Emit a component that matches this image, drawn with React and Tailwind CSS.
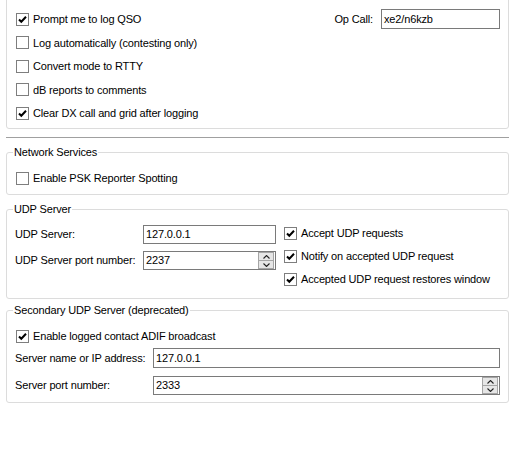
import React from 'react';

const CheckMark = () => (
  <svg width="11" height="11" viewBox="0 0 11 11" className="block">
    <path d="M2 5.5 L4.3 7.8 L9 2.8" fill="none" stroke="#000" strokeWidth="2" />
  </svg>
);

const Check = ({ checked, label, className = '' }) => (
  <div className={`flex items-center ${className}`}>
    <div className="w-[13px] h-[13px] border border-[#7e7e7e] bg-white flex items-center justify-center shrink-0">
      {checked && <CheckMark />}
    </div>
    <span className="ml-[4px] whitespace-nowrap">{label}</span>
  </div>
);

const Field = ({ value, className = '' }) => (
  <div className={`border border-[#7a7a7a] bg-white flex items-center pl-[2px] ${className}`}>
    <span className="leading-none">{value}</span>
  </div>
);

const Spin = ({ value, className = '' }) => (
  <div className={`border border-[#7a7a7a] bg-white flex items-center pl-[2px] pr-px ${className}`}>
    <span className="flex-1 leading-none">{value}</span>
    <div className="flex flex-col w-[16px] h-[17px]">
      <div className="flex-1 bg-[#e6e6e6] border border-[#a5a5a5] flex items-center justify-center">
        <svg width="7" height="4" viewBox="0 0 7 4">
          <path d="M0.5 3.5 L3.5 0.5 L6.5 3.5" fill="none" stroke="#222" strokeWidth="1.1" />
        </svg>
      </div>
      <div className="flex-1 bg-[#e6e6e6] border border-t-0 border-[#a5a5a5] flex items-center justify-center">
        <svg width="7" height="4" viewBox="0 0 7 4">
          <path d="M0.5 0.5 L3.5 3.5 L6.5 0.5" fill="none" stroke="#222" strokeWidth="1.1" />
        </svg>
      </div>
    </div>
  </div>
);

// title sitting on the top border of a group box
const GroupLabel = ({ children }) => (
  <div className="-mt-[7px] -ml-[2px] w-fit bg-white px-px leading-[13px]">{children}</div>
);

export default function App() {
  return (
    <div
      className="w-[515px] h-[455px] bg-white overflow-hidden text-[11px] tracking-[-0.15px] text-black px-[6px]"
      style={{ fontFamily: '"Liberation Sans", Arial, sans-serif' }}
    >
      {/* reporting group, its top edge is scrolled out of view */}
      <div className="-mt-[10px] h-[139px] border border-[#dcdcdc] rounded-[3px] pl-[9px] pr-[8px] pt-[16.5px]">
        <div className="flex items-center h-[23.5px]">
          <Check checked label="Prompt me to log QSO" />
          <div className="ml-auto flex items-center">
            <span className="mr-[8px]">Op Call:</span>
            <Field value="xe2/n6kzb" className="w-[119px] h-[20px]" />
          </div>
        </div>
        <div className="flex items-center h-[23.5px]">
          <Check label="Log automatically (contesting only)" />
        </div>
        <div className="flex items-center h-[23.5px]">
          <Check label="Convert mode to RTTY" />
        </div>
        <div className="flex items-center h-[23.5px]">
          <Check label="dB reports to comments" />
        </div>
        <div className="flex items-center h-[23.5px]">
          <Check checked label="Clear DX call and grid after logging" />
        </div>
      </div>

      <div className="mt-[8px] border-t border-[#a0a0a0]" />

      {/* network services */}
      <div className="mt-[14px] h-[43px] border border-[#dcdcdc] rounded-[3px] pl-[8px]">
        <GroupLabel>Network Services</GroupLabel>
        <div className="mt-[10px] h-[18px] flex items-center ml-[1px]">
          <Check label="Enable PSK Reporter Spotting" />
        </div>
      </div>

      {/* udp server */}
      <div className="mt-[14px] h-[90px] border border-[#dcdcdc] rounded-[3px] pl-[8px]">
        <GroupLabel>UDP Server</GroupLabel>
        <div className="flex">
          <div className="pt-[9px] w-[268px] flex flex-col gap-[7px]">
            <div className="flex items-center">
              <span className="w-[128px] shrink-0">UDP Server:</span>
              <Field value="127.0.0.1" className="w-[133px] h-[19px]" />
            </div>
            <div className="flex items-center">
              <span className="w-[128px] shrink-0">UDP Server port number:</span>
              <Spin value="2237" className="w-[133px] h-[19px]" />
            </div>
          </div>
          <div className="pt-[6px] pl-[1px] flex flex-col">
            <Check checked label="Accept UDP requests" className="h-[23px]" />
            <Check checked label="Notify on accepted UDP request" className="h-[23px]" />
            <Check checked label="Accepted UDP request restores window" className="h-[23px]" />
          </div>
        </div>
      </div>

      {/* secondary udp server */}
      <div className="mt-[11px] h-[93px] border border-[#dcdcdc] rounded-[3px] pl-[8px] pr-[8px]">
        <GroupLabel>Secondary UDP Server (deprecated)</GroupLabel>
        <Check checked label="Enable logged contact ADIF broadcast" className="mt-[10px] h-[18px] ml-[1px]" />
        <div className="mt-[3px] flex items-center">
          <span className="w-[138px] shrink-0">Server name or IP address:</span>
          <Field value="127.0.0.1" className="flex-1 h-[20px]" />
        </div>
        <div className="mt-[8px] flex items-center">
          <span className="w-[138px] shrink-0">Server port number:</span>
          <Spin value="2333" className="flex-1 h-[19px]" />
        </div>
      </div>
    </div>
  );
}
